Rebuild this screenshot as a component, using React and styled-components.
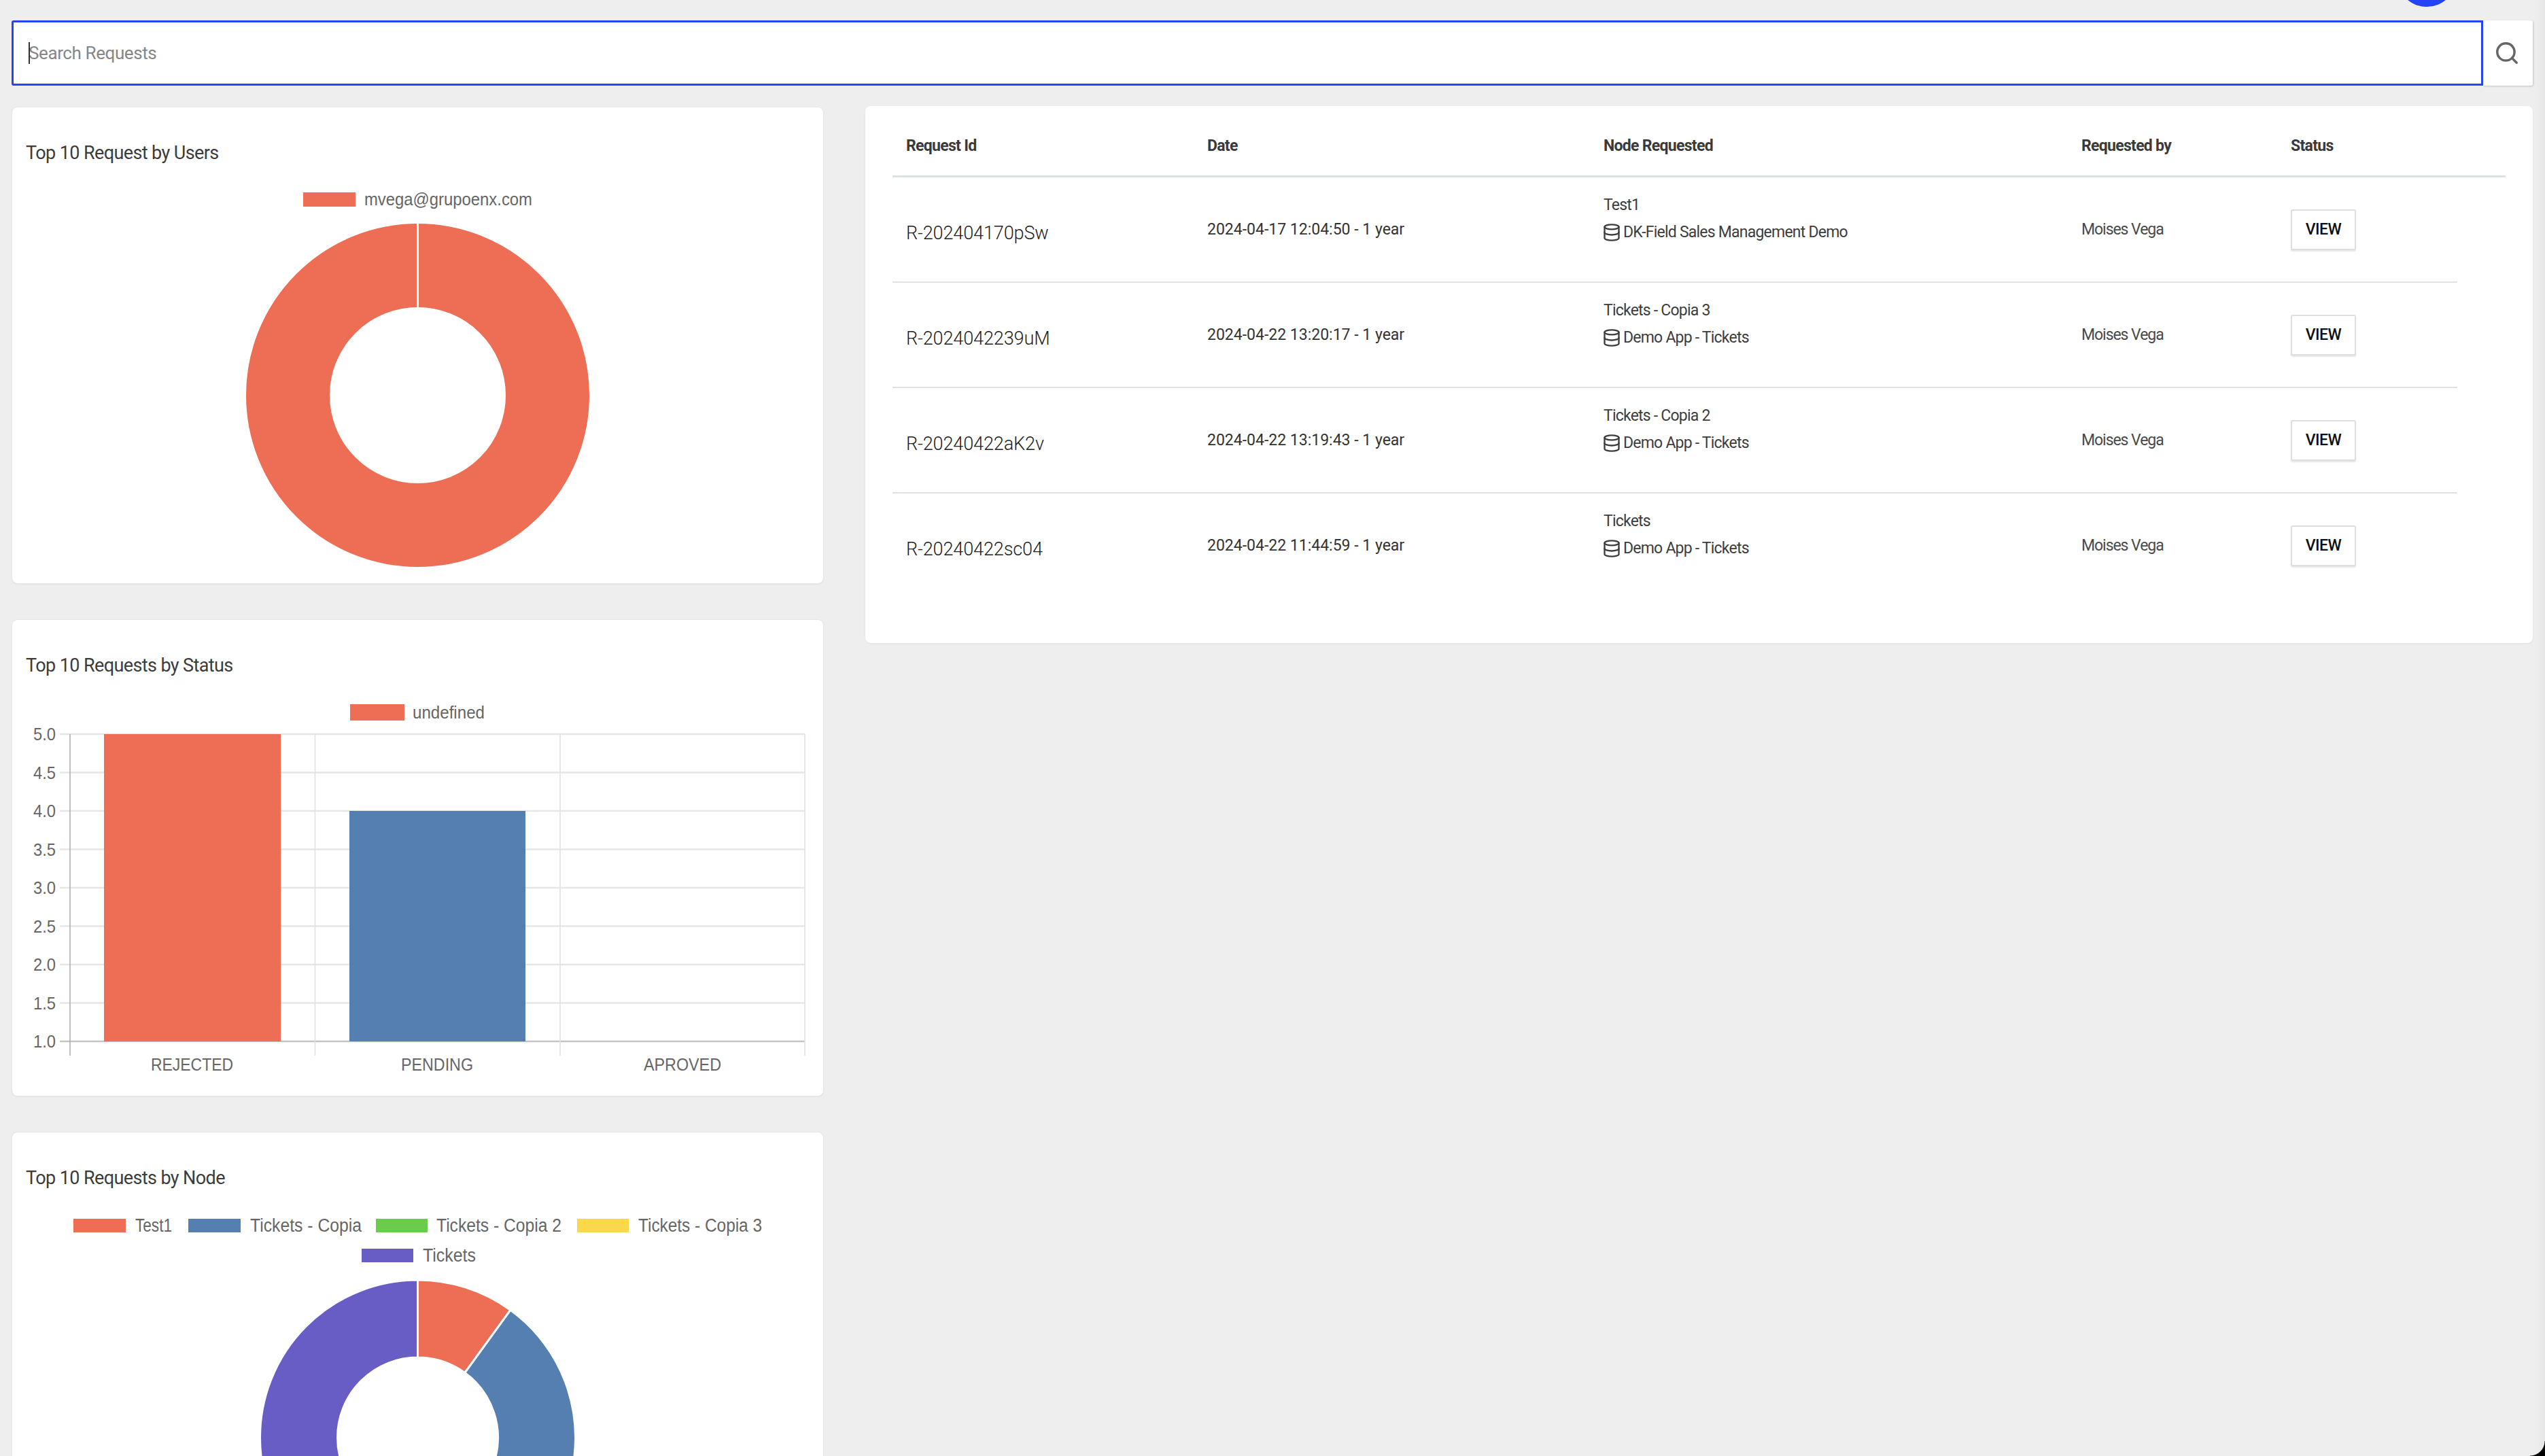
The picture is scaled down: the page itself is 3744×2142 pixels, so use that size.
import React from 'react';
import styled, { createGlobalStyle } from 'styled-components';
import { Search, Database } from 'lucide-react';

const GlobalStyle = createGlobalStyle`
  html, body {
    margin: 0;
    height: 100%;
    overflow: hidden;
    background: #eeeeee;
    font-family: Roboto, "Liberation Sans", sans-serif;
    color: #3d3d3d;
  }
`;

const Page = styled.div`
  position: relative;
  box-sizing: border-box;
  height: 2142px;
  padding: 30px 18px 0 17px;
  overflow: hidden;
`;

const Avatar = styled.div`
  position: absolute;
  top: -78px;
  left: 3526px;
  width: 88px;
  height: 88px;
  border-radius: 50%;
  background: #2343f5;
`;

const EdgeShade = styled.div`
  position: absolute;
  top: 0;
  right: 0;
  bottom: 0;
  width: 16px;
  background: linear-gradient(to left, rgba(0, 0, 0, 0.03), rgba(0, 0, 0, 0));
  pointer-events: none;
`;

const WindowCorner = styled.div`
  position: absolute;
  right: 0;
  bottom: 0;
  width: 22px;
  height: 22px;
  background: radial-gradient(circle at 0 0, transparent 21px, #000 22px);
`;

const SearchBar = styled.div`
  position: relative;
  display: flex;
  height: 96px;
`;

const SearchInput = styled.input`
  flex: 1;
  box-sizing: border-box;
  height: 96px;
  padding: 0 0 0 22px;
  border: 3px solid #2444f5;
  border-radius: 3px 0 0 3px;
  outline: none;
  background: #fff;
  font-family: inherit;
  font-size: 26px;
  letter-spacing: -0.4px;
  caret-color: transparent;

  &::placeholder {
    color: #868686;
    opacity: 1;
  }
`;

const Caret = styled.span`
  position: absolute;
  top: 32px;
  left: 25px;
  width: 2px;
  height: 32px;
  background: #333;
`;

const SearchButton = styled.button`
  display: flex;
  align-items: center;
  justify-content: center;
  width: 73px;
  height: 96px;
  padding: 0 3px 0 0;
  border: none;
  border-radius: 0 3px 3px 0;
  background: #fff;
  box-shadow: 1px 1px 3px rgba(0, 0, 0, 0.18);
  color: #666;
`;

const Columns = styled.div`
  display: grid;
  grid-template-columns: 1194px 1fr;
  column-gap: 62px;
  align-items: start;
`;

const LeftColumn = styled.div`
  display: flex;
  flex-direction: column;
  gap: 54px;
  padding: 32px 0 0 1px;
`;

const ChartCard = styled.section`
  flex: none;
  background: #fff;
  border-radius: 8px;
  box-shadow: 0 0 0 1px #e7e7e7, 0 1px 3px rgba(0, 0, 0, 0.1);
`;

const ChartTitle = styled.h3`
  margin: 0;
  height: 112px;
  box-sizing: border-box;
  padding: 52px 0 0 20px;
  font-size: 27px;
  line-height: 30px;
  font-weight: 400;
  letter-spacing: -0.6px;
  color: #3c3c3c;
`;

const ChartSvg = styled.svg`
  display: block;
`;

const LegendText = styled.text`
  font-family: "Liberation Sans", Arial, sans-serif;
  fill: #666;
`;

const TablePanel = styled.section`
  margin-top: 30px;
  padding: 0 40px 65px;
  background: #fff;
  border-radius: 8px;
  box-shadow: 0 1px 3px rgba(0, 0, 0, 0.06);
`;

const HeaderRow = styled.div`
  display: grid;
  grid-template-columns: 443px 583px 703px 308px 1fr;
  align-items: center;
  box-sizing: border-box;
  height: 105px;
  padding: 14px 0 0 20px;
  border-bottom: 3.5px solid #dee2e6;
`;

const HeaderCell = styled.div`
  font-size: 23px;
  font-weight: 700;
  letter-spacing: -0.7px;
  color: #3a3a3a;
`;

const Row = styled.div`
  display: grid;
  grid-template-columns: 443px 583px 703px 308px 1fr;
  align-items: center;
  box-sizing: border-box;
  width: 2302px;
  height: 155px;
  padding-left: 20px;
  border-bottom: 2.5px solid ${(p) => (p.$last ? 'transparent' : '#dee2e6')};
`;

const RequestId = styled.div`
  padding-top: 10px;
  font-size: 27px;
  font-weight: 300;
  letter-spacing: -0.1px;
  color: #222;
`;

const DateCell = styled.div`
  font-size: 23px;
  color: #333;
`;

const NodeCell = styled.div`
  align-self: start;
  display: flex;
  flex-direction: column;
  gap: 8px;
  padding-top: 25px;
  font-size: 23px;
  line-height: 32px;
  letter-spacing: -0.78px;
  color: #3d3d3d;
`;

const NodeApp = styled.div`
  display: flex;
  align-items: center;
  gap: 3px;

  svg {
    margin-left: -2px;
  }
`;

const UserCell = styled.div`
  font-size: 23px;
  letter-spacing: -1.05px;
  color: #4a4a4a;
`;

const ViewButton = styled.button`
  width: 96px;
  height: 60px;
  padding: 0;
  background: #fff;
  border: 2px solid #dedede;
  border-radius: 3px;
  box-shadow: 0 2px 2px rgba(0, 0, 0, 0.1);
  font-family: inherit;
  font-size: 23px;
  font-weight: 500;
  letter-spacing: -0.5px;
  color: #111;
`;

const ORANGE = '#ed6e54';
const BLUE = '#567fb1';
const GREEN = '#6acb4d';
const YELLOW = '#f9d84b';
const PURPLE = '#685dc4';

const requests = [
  { id: 'R-202404170pSw', date: '2024-04-17 12:04:50 - 1 year', node: 'Test1', app: 'DK-Field Sales Management Demo' },
  { id: 'R-2024042239uM', date: '2024-04-22 13:20:17 - 1 year', node: 'Tickets - Copia 3', app: 'Demo App - Tickets' },
  { id: 'R-20240422aK2v', date: '2024-04-22 13:19:43 - 1 year', node: 'Tickets - Copia 2', app: 'Demo App - Tickets' },
  { id: 'R-20240422sc04', date: '2024-04-22 11:44:59 - 1 year', node: 'Tickets', app: 'Demo App - Tickets' },
];

const polar = (cx, cy, r, deg) => {
  const a = ((deg - 90) * Math.PI) / 180;
  return [cx + r * Math.cos(a), cy + r * Math.sin(a)];
};

const slicePath = (cx, cy, outer, inner, from, to) => {
  const large = to - from > 180 ? 1 : 0;
  const [x1, y1] = polar(cx, cy, outer, from);
  const [x2, y2] = polar(cx, cy, outer, to);
  const [x3, y3] = polar(cx, cy, inner, to);
  const [x4, y4] = polar(cx, cy, inner, from);
  return `M${x1} ${y1}A${outer} ${outer} 0 ${large} 1 ${x2} ${y2}L${x3} ${y3}A${inner} ${inner} 0 ${large} 0 ${x4} ${y4}Z`;
};

const Legend = ({ x, y, w, h, color, label, tx, tw, ty, size }) => (
  <>
    <rect x={x} y={y} width={w} height={h} fill={color} />
    <LegendText x={tx} y={ty} fontSize={size} textLength={tw} lengthAdjust="spacingAndGlyphs">
      {label}
    </LegendText>
  </>
);

const UsersChart = () => (
  <ChartSvg width="1193" height="588" viewBox="18 270 1193 588">
    <Legend x={446} y={283} w={77} h={21} color={ORANGE} label="mvega@grupoenx.com" tx={536} tw={247} ty={302} size={26} />
    <circle cx="614.5" cy="581.5" r="191" fill="none" stroke={ORANGE} strokeWidth="123" />
    <line x1="614.5" y1="329" x2="614.5" y2="452" stroke="#fff" strokeWidth="3" />
  </ChartSvg>
);

const ticks = ['5.0', '4.5', '4.0', '3.5', '3.0', '2.5', '2.0', '1.5', '1.0'];
const bands = [
  { label: 'REJECTED', x: 222, w: 121 },
  { label: 'PENDING', x: 590, w: 106 },
  { label: 'APROVED', x: 947, w: 114 },
];

const StatusChart = () => (
  <ChartSvg width="1193" height="588" viewBox="18 1024 1193 588">
    <Legend x={515} y={1036} w={80} h={24} color={ORANGE} label="undefined" tx={607} tw={106} ty={1057} size={26} />
    {ticks.map((t, i) => {
      const y = 1080 + i * 56.5;
      return (
        <g key={t}>
          <line x1="88" y1={y} x2="1184" y2={y} stroke={i === 8 ? '#c4c4c4' : '#e6e6e6'} strokeWidth="2.4" />
          <LegendText x="49" y={y + 9} fontSize="25" textLength="33" lengthAdjust="spacingAndGlyphs">{t}</LegendText>
        </g>
      );
    })}
    {[103, 463.5, 824, 1184].map((x, i) => (
      <line key={x} x1={x} y1="1080" x2={x} y2="1553" stroke={i === 0 ? '#b0b0b0' : '#e2e2e2'} strokeWidth="1.6" />
    ))}
    <rect x="153" y="1080" width="260" height="452" fill={ORANGE} />
    <rect x="514" y="1193" width="259" height="339" fill={BLUE} />
    {bands.map((b) => (
      <LegendText key={b.label} x={b.x} y="1575" fontSize="26" textLength={b.w} lengthAdjust="spacingAndGlyphs">{b.label}</LegendText>
    ))}
  </ChartSvg>
);

const nodeLegend = [
  { label: 'Test1', color: ORANGE, x: 108, w: 77, y: 1793, tx: 199, tw: 54, ty: 1812 },
  { label: 'Tickets - Copia', color: BLUE, x: 277, w: 77, y: 1793, tx: 368, tw: 164, ty: 1812 },
  { label: 'Tickets - Copia 2', color: GREEN, x: 553, w: 76, y: 1793, tx: 642, tw: 184, ty: 1812 },
  { label: 'Tickets - Copia 3', color: YELLOW, x: 849, w: 76, y: 1793, tx: 939, tw: 182, ty: 1812 },
  { label: 'Tickets', color: PURPLE, x: 532, w: 76, y: 1837, tx: 622, tw: 78, ty: 1856 },
];

const nodeSlices = [
  { color: ORANGE, from: 0, to: 36 },
  { color: BLUE, from: 36, to: 108 },
  { color: GREEN, from: 108, to: 144 },
  { color: YELLOW, from: 144, to: 180 },
  { color: PURPLE, from: 180, to: 360 },
];

const NodeChart = () => (
  <ChartSvg width="1193" height="588" viewBox="18 1778 1193 588">
    {nodeLegend.map((l) => (
      <Legend key={l.label} x={l.x} y={l.y} w={l.w} h={20} color={l.color} label={l.label} tx={l.tx} tw={l.tw} ty={l.ty} size={27} />
    ))}
    {nodeSlices.map((s) => (
      <path key={s.color} d={slicePath(614.5, 2115, 232, 118, s.from, s.to)} fill={s.color} stroke="#fff" strokeWidth="3" />
    ))}
  </ChartSvg>
);

export default function App() {
  return (
    <Page>
      <GlobalStyle />
      <Avatar />
      <SearchBar>
        <SearchInput placeholder="Search Requests" />
        <Caret />
        <SearchButton aria-label="Search">
          <Search size={38} strokeWidth={2.2} />
        </SearchButton>
      </SearchBar>
      <Columns>
        <LeftColumn>
          <ChartCard>
            <ChartTitle>Top 10 Request by Users</ChartTitle>
            <UsersChart />
          </ChartCard>
          <ChartCard>
            <ChartTitle>Top 10 Requests by Status</ChartTitle>
            <StatusChart />
          </ChartCard>
          <ChartCard>
            <ChartTitle>Top 10 Requests by Node</ChartTitle>
            <NodeChart />
          </ChartCard>
        </LeftColumn>
        <TablePanel>
          <HeaderRow>
            <HeaderCell>Request Id</HeaderCell>
            <HeaderCell>Date</HeaderCell>
            <HeaderCell>Node Requested</HeaderCell>
            <HeaderCell>Requested by</HeaderCell>
            <HeaderCell>Status</HeaderCell>
          </HeaderRow>
          {requests.map((r, i) => (
            <Row key={r.id} $last={i === requests.length - 1}>
              <RequestId>{r.id}</RequestId>
              <DateCell>{r.date}</DateCell>
              <NodeCell>
                <div>{r.node}</div>
                <NodeApp>
                  <Database size={28} strokeWidth={2} />
                  {r.app}
                </NodeApp>
              </NodeCell>
              <UserCell>Moises Vega</UserCell>
              <div>
                <ViewButton>VIEW</ViewButton>
              </div>
            </Row>
          ))}
        </TablePanel>
      </Columns>
      <EdgeShade />
      <WindowCorner />
    </Page>
  );
}
